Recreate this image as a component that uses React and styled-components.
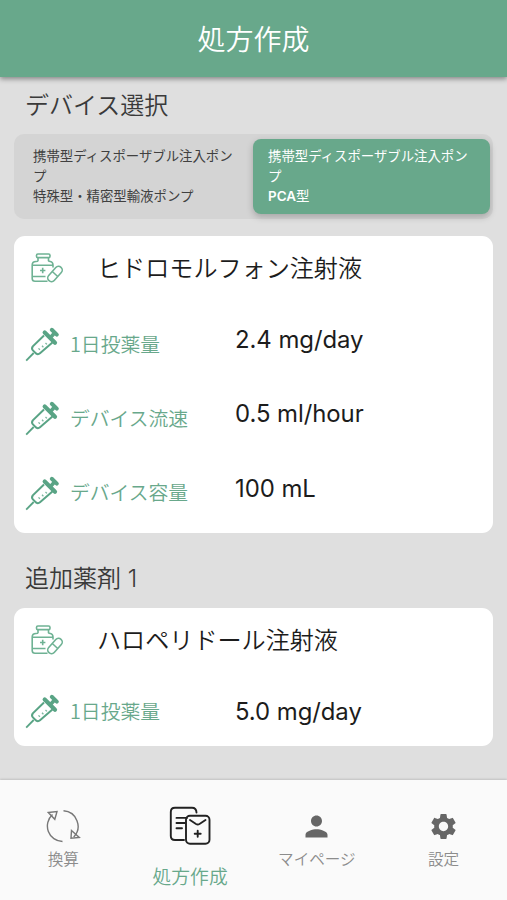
import React from "react"
import styled, { createGlobalStyle } from "styled-components"
import { MdPerson, MdSettings } from "react-icons/md"

const green = "#68a88b"

const GlobalStyle = createGlobalStyle`
  * {
    box-sizing: border-box;
  }
  body {
    margin: 0;
    background: #dfdfdf;
    font-family: Inter, "Noto Sans CJK JP", sans-serif;
    font-weight: 400;
    color: #1c1c1c;
  }
`

const Screen = styled.div`
  display: flex;
  flex-direction: column;
  height: 900px;
  overflow: hidden;
`

const Header = styled.header`
  flex: none;
  display: flex;
  align-items: center;
  justify-content: center;
  height: 77px;
  padding-top: 2px;
  background: ${green};
  box-shadow: 0 2px 5px rgba(0, 0, 0, 0.4);
`

const Title = styled.h1`
  margin: 0;
  font-size: 28px;
  font-weight: 350;
  line-height: 40px;
  color: #fff;
`

const Content = styled.main`
  flex: 1;
  padding: 11px 14px 0;
`

const SectionTitle = styled.h2`
  margin: 0;
  padding-left: 11px;
  font-size: 24px;
  font-weight: 350;
  line-height: 36px;
  color: #3a3a3a;
`

const Segments = styled.div`
  display: grid;
  grid-template-columns: 1fr 237px;
  height: 85px;
  margin: 10px 0 17px;
  padding: 5px 3px 5px 0;
  border-radius: 10px;
  background: #d4d4d4;
`

const Segment = styled.button`
  display: flex;
  align-items: flex-start;
  padding: 7px 15px 0 ${props => props.selected ? 15 : 19}px;
  border: 0;
  border-radius: 8px;
  background: ${props => props.selected ? green : "transparent"};
  box-shadow: ${props => props.selected ? "0 3px 7px rgba(0, 0, 0, 0.22)" : "none"};
  color: ${props => props.selected ? "#fff" : "#404040"};
  font-family: inherit;
  font-size: 13.4px;
  font-weight: 400;
  line-height: 20px;
  text-align: left;
  white-space: pre-line;
`

const Latin = styled.span`
  font-weight: 600;
`

const Card = styled.section`
  height: ${props => props.height}px;
  margin: 11px 0 28px;
  padding-top: 10px;
  border-radius: 11px;
  background: #fff;
`

const DrugRow = styled.div`
  display: flex;
  align-items: center;
  height: 43px;
  padding-left: 15px;
`

const DrugName = styled.h3`
  margin: 0 0 0 32px;
  padding-top: 2px;
  font-size: 24.1px;
  font-weight: 350;
  line-height: 36px;
`

const Doses = styled.div`
  padding-top: ${props => props.top}px;
`

const DoseRow = styled.div`
  display: grid;
  grid-template-columns: 45px 166px 1fr;
  align-items: center;
  height: 74.3px;
  padding-left: 10px;
`

const DoseLabel = styled.span`
  padding: 0 0 1px 1px;
  font-family: "Noto Sans CJK JP", sans-serif;
  font-size: 19.8px;
  font-weight: 350;
  line-height: 30px;
  color: ${green};
`

const DoseValue = styled.span`
  padding-bottom: ${props => props.lift}px;
  font-size: 23.9px;
  letter-spacing: -0.05px;
`

const TabBar = styled.nav`
  flex: none;
  display: grid;
  grid-template-columns: repeat(4, 1fr);
  height: 120px;
  background: #fafafa;
  box-shadow: 0 -1px 2px rgba(0, 0, 0, 0.14);
`

const Tab = styled.a`
  display: flex;
  flex-direction: column;
  align-items: center;
  padding-top: ${props => props.active ? 25 : 31}px;
  color: ${props => props.active ? green : "#8c8c8c"};
  font-size: ${props => props.active ? 18.8 : 15.6}px;
  font-weight: 350;
  line-height: 24px;
`

const TabIcon = styled.span`
  display: flex;
  align-items: center;
  justify-content: center;
  height: ${props => props.active ? 42 : 30}px;
  margin-bottom: ${props => props.active ? 19 : 7}px;
  color: #666;
`

function BottleIcon() {
  return (
    <svg width="36" height="32" viewBox="0 0 36 32" fill="none" stroke="#6fb294" strokeWidth="1.6" strokeLinejoin="round">
      <rect x="7.5" y="2" width="13.5" height="3.6" rx="1.4" />
      <path d="M9 5.8v3Q8.700 9.500 7 9.500Q3.200 9.500 3.200 13V26.500Q3.200 29.200 6 29.200H18.500M19.500 5.800v3Q20 9.500 21.300 9.500Q24 10 24 13V15.500M3.500 13.300H24M3.500 24.500H16.500" />
      <path d="M13.700 15.800v5.400M11 18.500h5.400" />
      <g transform="translate(26 22) rotate(-48)">
        <rect x="-9" y="-3.700" width="18" height="7.400" rx="3.700" fill="#fff" />
        <path d="M0-3.700v7.400" />
      </g>
    </svg>
  )
}

function SyringeIcon() {
  return (
    <svg width="36" height="36" viewBox="0 0 36 36" fill="none" stroke="#59a485">
      <path d="M2.200 34.600L9.700 27" strokeWidth="1.800" />
      <path d="M20 9.500L8.800 20.400Q7.200 22.500 8.900 24.400L12 27.400Q14 29 16 27.300L28.400 16.500" strokeWidth="2" />
      <path d="M20.700 6.500L31 16.800" strokeWidth="4.200" strokeLinecap="round" />
      <path d="M26 12L31 6.500" strokeWidth="3.600" />
      <path d="M27.800 3.800L32.800 8.600" strokeWidth="4" strokeLinecap="round" />
      <path d="M14.500 22.400l1.400 1.400M18 19.800l1.400 1.400M21.500 17l1.400 1.400" strokeWidth="1.300" opacity="0.8" />
    </svg>
  )
}

function ConvertIcon() {
  return (
    <svg width="36" height="36" viewBox="0 0 36 36" fill="none" stroke="#777" strokeWidth="1.400">
      <path d="M17.500 33.500A15.500 15.500 0 0 1 7.500 6.500M18.500 2.800A15.500 15.500 0 0 1 28.700 29" />
      <path d="M3.300 4.500L12 3.600L9.800 11.300ZM26.500 22.500L34.300 29.500L26 30.300Z" />
    </svg>
  )
}

function PrescriptionIcon() {
  return (
    <svg width="42" height="40" viewBox="0 0 42 40" fill="none" stroke="#222" strokeWidth="1.900" strokeLinecap="round">
      <path d="M15 34H6Q1.800 34 1.800 30V6Q1.800 1.800 6 1.800H23Q27.300 1.800 27.500 6.500" />
      <path d="M7.500 11.900H18M7.500 17H16M7.500 22.200H13" />
      <rect x="17" y="9.800" width="23.500" height="28" rx="4" />
      <path d="M21 14L27 18Q28.700 19 30.500 18L36.500 14M28.700 24.800v6M25.700 27.800h6" />
    </svg>
  )
}

function Dose({ label, value, lift = 9 }) {
  return (
    <DoseRow>
      <SyringeIcon />
      <DoseLabel>{label}</DoseLabel>
      <DoseValue lift={lift}>{value}</DoseValue>
    </DoseRow>
  )
}

export default function App() {
  return (
    <Screen>
      <GlobalStyle />
      <Header>
        <Title>処方作成</Title>
      </Header>
      <Content>
        <SectionTitle>デバイス選択</SectionTitle>
        <Segments>
          <Segment>{"携帯型ディスポーザブル注入ポンプ\n特殊型・精密型輸液ポンプ"}</Segment>
          <Segment selected>
            <span>{"携帯型ディスポーザブル注入ポンプ\n"}<Latin>PCA</Latin>型</span>
          </Segment>
        </Segments>
        <Card height={297}>
          <DrugRow>
            <BottleIcon />
            <DrugName>ヒドロモルフォン注射液</DrugName>
          </DrugRow>
          <Doses top={18}>
            <Dose label="1日投薬量" value="2.4 mg/day" />
            <Dose label="デバイス流速" value="0.5 ml/hour" />
            <Dose label="デバイス容量" value="100 mL" />
          </Doses>
        </Card>
        <SectionTitle>追加薬剤 1</SectionTitle>
        <Card height={138}>
          <DrugRow>
            <BottleIcon />
            <DrugName>ハロペリドール注射液</DrugName>
          </DrugRow>
          <Doses top={13}>
            <Dose label="1日投薬量" value="5.0 mg/day" lift={0} />
          </Doses>
        </Card>
      </Content>
      <TabBar>
        <Tab>
          <TabIcon><ConvertIcon /></TabIcon>
          換算
        </Tab>
        <Tab active>
          <TabIcon active><PrescriptionIcon /></TabIcon>
          処方作成
        </Tab>
        <Tab>
          <TabIcon><MdPerson size={33} /></TabIcon>
          マイページ
        </Tab>
        <Tab>
          <TabIcon><MdSettings size={31} /></TabIcon>
          設定
        </Tab>
      </TabBar>
    </Screen>
  )
}
